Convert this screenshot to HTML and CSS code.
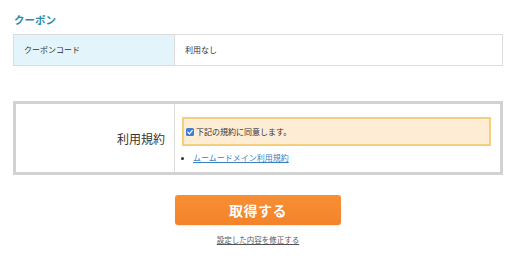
FILE: index.html
```html
<!DOCTYPE html>
<html lang="ja">
<head>
<meta charset="utf-8">
<link rel="stylesheet" href="styles.css">
</head>
<body>
<div class="page">
  <h2 class="section-title">クーポン</h2>
  <div class="coupon-table">
    <div class="coupon-label">クーポンコード</div>
    <div class="coupon-value">利用なし</div>
  </div>

  <div class="terms">
    <div class="terms-label">利用規約</div>
    <div class="terms-body">
      <label class="agree">
        <span class="check"><svg viewBox="0 0 8 8" width="8" height="8"><path d="M1.8 4.2 L3.4 5.8 L6.3 2.4" fill="none" stroke="#fff" stroke-width="1.2" stroke-linecap="round" stroke-linejoin="round"/></svg></span>
        <span class="agree-text">下記の規約に同意します。</span>
      </label>
      <ul class="terms-links">
        <li><a href="#" class="terms-link">ムームードメイン利用規約</a></li>
      </ul>
    </div>
  </div>

  <div class="actions">
    <button class="submit">取得する</button>
    <a href="#" class="back-link">設定した内容を修正する</a>
  </div>
</div>
</body>
</html>
```

FILE: styles.css
```css
* { box-sizing: border-box; }
html, body { margin: 0; padding: 0; background: #fff; }
body {
  font-family: "Noto Sans CJK JP", "Noto Sans", sans-serif;
  color: #333;
}
.page {
  width: 530px;
  padding: 12px 27px 0 13px;
}
.section-title {
  margin: 0 0 7px 1px;
  font-size: 10.5px;
  line-height: 15px;
  font-weight: bold;
  color: #2a8aa6;
}
.coupon-table {
  display: grid;
  grid-template-columns: 161px 1fr;
  height: 32px;
  border: 1px solid #dcdcdc;
  font-size: 8px;
  line-height: 12px;
}
.coupon-label {
  background: #e3f4fa;
  border-right: 1px solid #dcdcdc;
  padding-left: 10px;
  display: flex;
  align-items: center;
}
.coupon-value {
  padding-left: 10px;
  display: flex;
  align-items: center;
}
.terms {
  margin-top: 35px;
  display: grid;
  grid-template-columns: 159px 1fr;
  border: 3px solid #d2d2d2;
  height: 74px;
}
.terms-label {
  border-right: 1px solid #dcdcdc;
  display: flex;
  align-items: center;
  justify-content: flex-end;
  padding-right: 9px;
  font-size: 12px;
  color: #333;
}
.terms-body {
  padding: 13px 9px 0 7px;
}
.agree {
  display: flex;
  align-items: center;
  height: 29px;
  background: #feecd5;
  border: 2px solid #f5cf80;
  padding-left: 2px;
  font-size: 8px;
  color: #333;
}
.check {
  width: 8px;
  height: 8px;
  border-radius: 1.5px;
  background: #3b7fd6;
  display: flex;
  margin-right: 2px;
}
.check svg { display: block; }
.terms-links {
  margin: 6px 0 0 0;
  padding: 0 0 0 11px;
  font-size: 8px;
  line-height: 12px;
}
.terms-links li { list-style: disc; }
.terms-links li::marker { color: #333; font-size: 7px; }
.terms-link {
  color: #3c7fbf;
  text-decoration: underline;
}
.actions {
  display: flex;
  flex-direction: column;
  align-items: center;
  padding-top: 20px;
}
.submit {
  width: 166px;
  height: 30px;
  border: none;
  border-radius: 3px;
  background: linear-gradient(#f78f34, #f4832a);
  color: #fff;
  font-family: "Noto Sans CJK JP", "Noto Sans", sans-serif;
  font-weight: bold;
  font-size: 14px;
  letter-spacing: 0.5px;
  padding: 0;
  box-shadow: 0 1px 1px rgba(0,0,0,0.08);
}
.back-link {
  margin-top: 9px;
  font-size: 7.5px;
  line-height: 11px;
  color: #555;
  text-decoration: underline;
}
```
